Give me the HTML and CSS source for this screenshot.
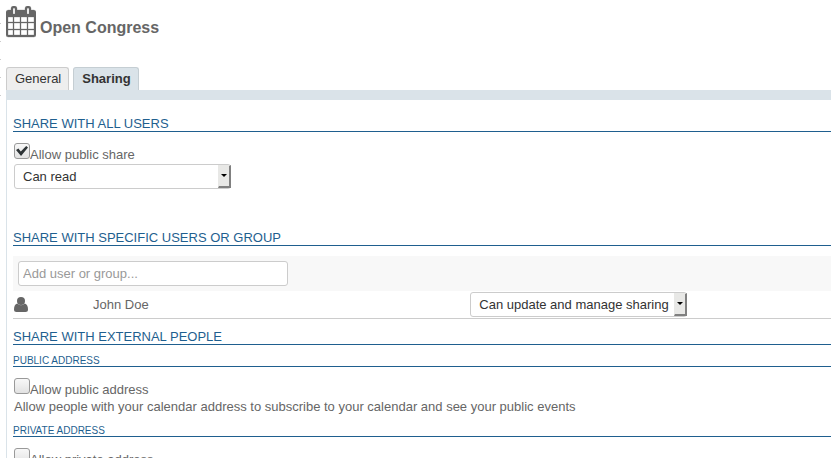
FILE: index.html
```html
<!DOCTYPE html>
<html lang="en">
<head>
<meta charset="utf-8">
<title>Open Congress</title>
<link rel="stylesheet" href="styles.css">
</head>
<body>
<header class="page-header">
  <svg class="calendar-icon" viewBox="0 0 30 32" width="30" height="32" aria-hidden="true">
    <path fill="#666" stroke="#666" stroke-width=".3" fill-rule="evenodd" d="M2.500 4H5V2.500Q5 0 7.500 0H8.500Q11 0 11 2.500V4H19V2.500Q19 0 21.500 0H22.500Q25 0 25 2.500V4H27.500Q30 4 30 6.500V29Q30 31 27.500 31H2.500Q0 31 0 29V6.500Q0 4 2.500 4ZM7 3V8H9V3Q9 2 8 2Q7 2 7 3ZM21 3V8H23V3Q23 2 22 2Q21 2 21 3ZM2 11V16H7V11ZM8 11V16H14V11ZM15 11V16H21V11ZM22 11V16H28V11ZM2 17V23H7V17ZM8 17V23H14V17ZM15 17V23H21V17ZM22 17V23H28V17ZM2 24V29H7V24ZM8 24V29H14V24ZM15 24V29H21V24ZM22 24V29H28V24Z"/>
  </svg>
  <h1>Open Congress</h1>
</header>
<nav class="tabs" role="tablist">
  <button class="tab" type="button" role="tab" aria-selected="false">General</button>
  <button class="tab active" type="button" role="tab" aria-selected="true">Sharing</button>
</nav>
<main class="panel">
  <section class="public-share">
    <h2>SHARE WITH ALL USERS</h2>
    <div class="check-row">
      <input type="checkbox" id="public-share" checked>
      <label for="public-share">Allow public share</label>
    </div>
    <div class="select-box">
      <select aria-label="Public access">
        <option>Can read</option>
        <option>Can update and manage sharing</option>
      </select>
      <svg class="arrow" viewBox="0 0 13 23" preserveAspectRatio="none" aria-hidden="true"><path fill="#e8e8e6" d="M0 0H13V23H0Z"/><path fill="#808080" d="M11 1L13 0V23H0L1 21H11Z"/><path fill="#000" d="M3 9H9L6 12Z"/></svg>
    </div>
  </section>
  <section>
    <h2>SHARE WITH SPECIFIC USERS OR GROUP</h2>
    <div class="search">
      <input type="text" placeholder="Add user or group..." aria-label="Add user or group">
    </div>
    <ul class="members">
      <li>
        <svg class="user-icon" viewBox="0 0 14 15" width="14" height="15" aria-hidden="true"><path fill="#666" d="M3.200 6.500Q7 10 10.800 6.500Q14 7.500 14 12.500Q14 15 11.500 15H2.500Q0 15 0 12.500Q0 7.500 3.200 6.500Z"/><circle cx="7" cy="4" r="4" fill="#666"/></svg>
        <span>John Doe</span>
        <div class="select-box">
          <select aria-label="Access for John Doe">
            <option>Can update and manage sharing</option>
            <option>Can read</option>
          </select>
          <svg class="arrow" viewBox="0 0 13 23" preserveAspectRatio="none" aria-hidden="true"><path fill="#e8e8e6" d="M0 0H13V23H0Z"/><path fill="#808080" d="M11 1L13 0V23H0L1 21H11Z"/><path fill="#000" d="M3 9H9L6 12Z"/></svg>
        </div>
      </li>
    </ul>
  </section>
  <section>
    <h2>SHARE WITH EXTERNAL PEOPLE</h2>
    <h3>PUBLIC ADDRESS</h3>
    <div class="check-row">
      <input type="checkbox" id="public-address">
      <label for="public-address">Allow public address</label>
    </div>
    <p>Allow people with your calendar address to subscribe to your calendar and see your public events</p>
    <h3>PRIVATE ADDRESS</h3>
    <div class="check-row">
      <input type="checkbox" id="private-address">
      <label for="private-address">Allow private address</label>
    </div>
  </section>
</main>
</body>
</html>
```
FILE: styles.css
```css
* { box-sizing: border-box; }

html {
  overflow: hidden;
  background: #fff;
}

body {
  margin: 0;
  padding: 6px 0 0 6px;
  color: #666;
  font: 13px/16px "Liberation Sans", Arial, sans-serif;
  background: repeating-linear-gradient(#fff 0 17px, #ccc 17px 18px) 0 6px / 1px 90px no-repeat;
}

.page-header {
  display: flex;
  align-items: flex-start;
  gap: 4px;
  height: 61px;
}

h1 {
  margin: 12px 0 0;
  font-size: 16px;
  line-height: 20px;
}

.tabs {
  display: flex;
  gap: 4px;
}

.tab {
  height: 23px;
  padding: 0 7px 0 8px;
  border: 1px solid #ccc;
  border-bottom: 0;
  border-radius: 3px 3px 0 0;
  background: #eee;
  color: #333;
  font: inherit;
}

.tab.active {
  border-color: #c5ced3;
  background: #dae3e9;
  font-weight: bold;
}

.panel {
  padding: 16px 0 0 6px;
  border-top: 10px solid #dae3e9;
  border-left: 1px solid #dae3e9;
}

h2, h3 {
  margin: 0;
  border-bottom: 1px solid #1f5f8f;
  color: #1f5f8f;
  font-weight: normal;
}

h2 {
  font-size: 13px;
  line-height: 15px;
}

h3 {
  margin-top: 11px;
  font-size: 10px;
  line-height: 10px;
}

.public-share { margin-bottom: 41px; }

.check-row {
  display: flex;
  height: 21px;
  margin: 11px 0 0 1px;
}

.check-row label { padding-top: 4px; }

input[type="checkbox"] {
  appearance: none;
  flex: none;
  width: 16px;
  height: 16px;
  margin: 0;
  border: 1px solid #999;
  border-radius: 3px;
  background: linear-gradient(#f8f8f8, #e2e2e2);
}

input[type="checkbox"]:checked::before {
  content: "";
  display: block;
  width: 12px;
  height: 10px;
  margin: 2px 1px;
  background: #2e3436;
  clip-path: polygon(0 40%, 20% 25%, 40% 55%, 85% 0, 100% 15%, 42% 100%);
}

.select-box {
  position: relative;
  width: 217px;
  height: 25px;
  margin-left: 1px;
}

.select-box select {
  appearance: none;
  width: 100%;
  height: 100%;
  padding: 0 16px 0 8px;
  border: 1px solid #ccc;
  border-radius: 3px;
  background: #fff;
  color: #333;
  font: inherit;
}

.arrow {
  position: absolute;
  top: 1px;
  right: 0;
  width: 13px;
  height: 23px;
  pointer-events: none;
}

.search {
  margin-top: 10px;
  padding: 5px;
  background: #f8f8f8;
}

.search input {
  display: block;
  width: 270px;
  height: 25px;
  padding: 0 4px;
  border: 1px solid #ccc;
  border-radius: 3px;
  background: #fff;
  color: #333;
  font: inherit;
}

.search input::placeholder { color: #999; }

.members {
  margin: 0 0 10px;
  padding: 0;
  list-style: none;
}

.members li {
  display: grid;
  grid-template-columns: 80px 46% auto;
  align-items: center;
  height: 28px;
  border-bottom: 1px solid #ccc;
}

.user-icon { margin-left: 1px; }

p { margin: 0 0 0 1px; }
```
